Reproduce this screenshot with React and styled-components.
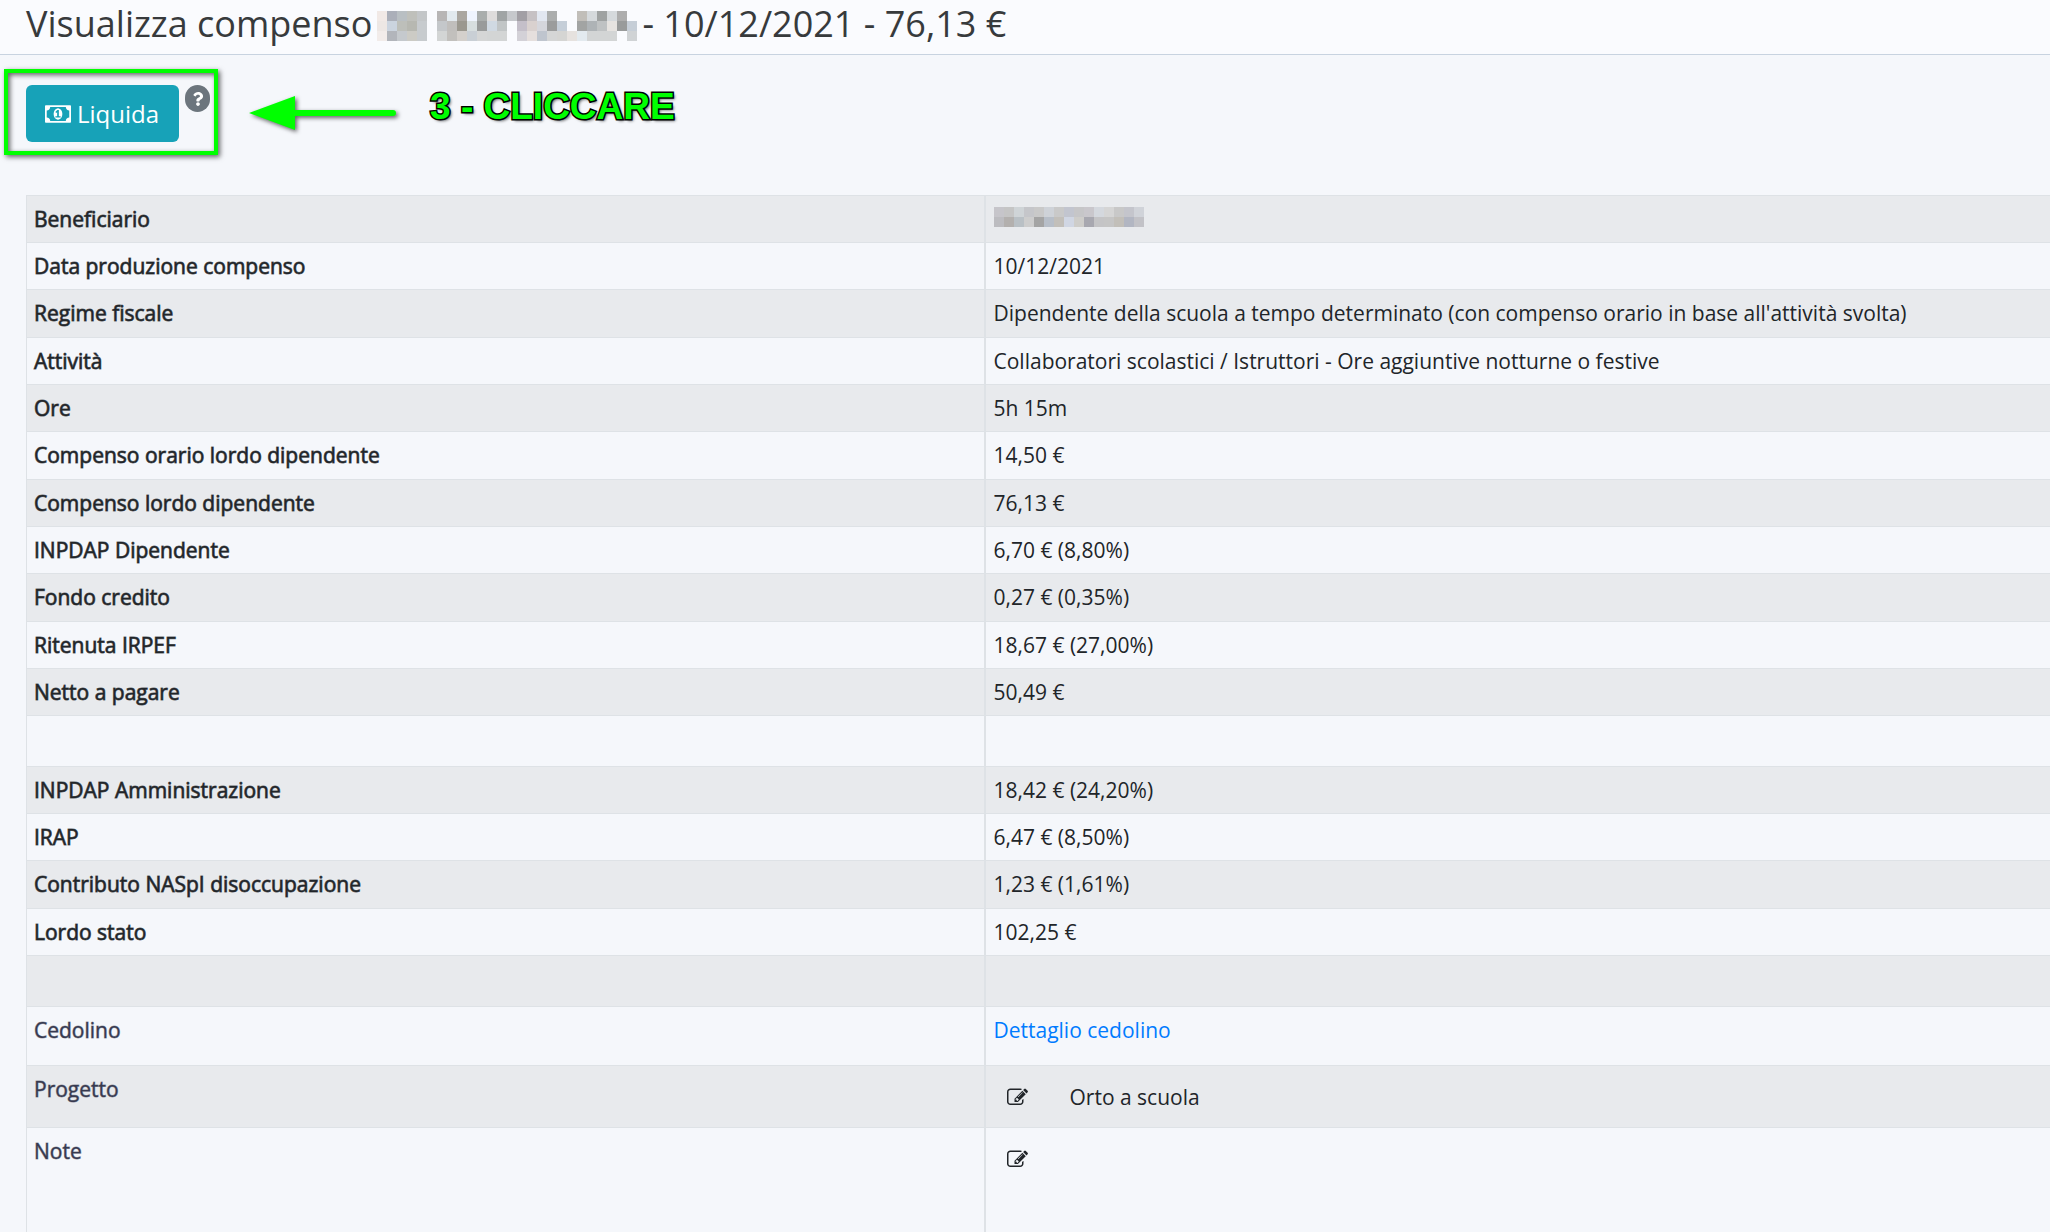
import styled, {createGlobalStyle} from "styled-components";
import {FaQuestion} from "react-icons/fa";

const rows = [
    {label: "Beneficiario", hidden: true},
    {label: "Data produzione compenso", value: "10/12/2021"},
    {label: "Regime fiscale", value: "Dipendente della scuola a tempo determinato (con compenso orario in base all'attività svolta)"},
    {label: "Attività", value: "Collaboratori scolastici / Istruttori - Ore aggiuntive notturne o festive"},
    {label: "Ore", value: "5h 15m"},
    {label: "Compenso orario lordo dipendente", value: "14,50 €"},
    {label: "Compenso lordo dipendente", value: "76,13 €"},
    {label: "INPDAP Dipendente", value: "6,70 € (8,80%)"},
    {label: "Fondo credito", value: "0,27 € (0,35%)"},
    {label: "Ritenuta IRPEF", value: "18,67 € (27,00%)"},
    {label: "Netto a pagare", value: "50,49 €"},
];

const adminRows = [
    {label: "INPDAP Amministrazione", value: "18,42 € (24,20%)"},
    {label: "IRAP", value: "6,47 € (8,50%)"},
    {label: "Contributo NASpI disoccupazione", value: "1,23 € (1,61%)"},
    {label: "Lordo stato", value: "102,25 €"},
];

// one array per line of 10px blocks, "" is empty
const titleMosaic = [
    ["#f1e9e6", "#abafb9", "#b9bfc3", "#bfc0bb", "#c3c6c8", "", "#b7b5b5", "#e2e9ee", "#aaa6a0", "#eff4fe", "#a9adac", "#dedcdc", "#a0a4a5", "#c6c8cc", "#a29fa5", "#c6c1c4", "#e2e7f1", "#abadad", "", "", "#c1beb9", "#d5d9dc", "#9fa2a2", "#d5d9dc", "#adadad", ""],
    ["#ede7e4", "#cbd4df", "#bdbfba", "#b7b8b1", "#c7cbce", "", "#c4c7ca", "#c0bebc", "#9b988f", "#d7dedf", "#999b9b", "#d0d9e2", "#c1c5c6", "", "#c4bfc9", "#d9d1cf", "#d5d6dc", "#9b9c9c", "#c5ced8", "", "#a2a4a3", "#aeb3b6", "#bfc2c3", "#e6e3e0", "#999b9b", "#c6ced7"],
    ["#f2ecea", "#b2b5bb", "#c5c9cd", "#cccbc5", "#c7cbce", "", "#d3d5d5", "#c2c0bd", "#d4d0cc", "#c9cfd5", "#d5d6d6", "#d3d5d5", "#d3d5d5", "", "#d3d1d7", "#e5dfdd", "#bfc5ce", "#d5d6d6", "#d5d5d3", "#e6e2df", "#e3eaef", "#d3d5d5", "#d3d5d5", "#d3d5d5", "", "#d0d3d5"],
];

const nameMosaic = [
    ["#c6c5ca", "#c5c5c5", "#cfd4d7", "#c5c6ca", "#c9c9c9", "#ced2d8", "#c9c9c9", "#c2c5cf", "#c6c6c8", "#c9c7cc", "#d4d8de", "#d5d5d5", "#c8c8c8", "#c4c5cc", "#d0d3d9"],
    ["#bcbcc0", "#b3b0ae", "#b9c0c5", "#cdcdcd", "#a4a4a4", "#b7bec8", "#c2bfba", "#d0d6e3", "#cecdca", "#a8a8b0", "#c4c4c6", "#c5c5c5", "#c2bfb9", "#b2b6c2", "#c2c2c7"],
];

function Mosaic({colors}){
    return(
        <Blocks $columns={colors[0].length} aria-hidden="true">
            {colors.flat().map((color, i) => (
                <Block key={i} $color={color} />
            ))}
        </Blocks>
    )
}

function MoneyIcon(){
    return(
        <MoneySvg viewBox="-64 256 1920 1280" aria-hidden="true">
            <path d="M704 1152h384v-96h-128v-448h-114l-148 137 77 80q42-37 55-57h2v288h-128v96zm512-256q0 70-21 142t-59.5 134-101.5 101-138 39-138-39-101.5-101-59.5-134-21-142 21-142 59.5-134 101.5-101 138-39 138 39 101.5 101 59.5 134 21 142zm512 256v-512q-106 0-181-75t-75-181h-1152q0 106-75 181t-181 75v512q106 0 181 75t75 181h1152q0-106 75-181t181-75zm128-832v1152q0 26-19 45t-45 19h-1792q-26 0-45-19t-19-45v-1152q0-26 19-45t45-19h1792q26 0 45 19t19 45z" />
        </MoneySvg>
    )
}

function EditIcon(){
    return(
        <svg width="21" height="21" viewBox="0 0 1792 1792" fill="currentColor" aria-hidden="true">
            <path d="M888 1184l116-116-152-152-116 116v56h96v96h56zm440-720q-16-16-33 1l-350 350q-17 17-1 33t33-1l350-350q17-17 1-33zm80 594v190q0 119-84.5 203.5t-203.5 84.5h-832q-119 0-203.5-84.5t-84.5-203.5v-832q0-119 84.5-203.5t203.5-84.5h832q63 0 117 25 15 7 18 23 3 17-9 29l-49 49q-14 14-32 8-23-6-45-6h-832q-66 0-113 47t-47 113v832q0 66 47 113t113 47h832q66 0 113-47t47-113v-126q0-13 9-22l64-64q15-15 35-7t20 29zm-96-738l288 288-672 672h-288v-288zm444 132l-92 92-288-288 92-92q28-28 68-28t68 28l152 152q28 28 28 68t-28 68z" />
        </svg>
    )
}

function DataRow({row}){
    return(
        <Row>
            <Label scope="row">{row.label}</Label>
            <Value>{row.hidden ? <Mosaic colors={nameMosaic} /> : row.value}</Value>
        </Row>
    )
}

function App(){
    return(
        <>
            <GlobalStyle />
            <Header>
                <Title>
                    Visualizza compenso
                    <Mosaic colors={titleMosaic} />
                    - 10/12/2021 - 76,13 €
                </Title>
            </Header>
            <Main>
                <Toolbar>
                    <Highlight>
                        <PayButton type="button">
                            <MoneyIcon />
                            Liquida
                        </PayButton>
                        <HelpButton type="button" aria-label="Aiuto">
                            <FaQuestion />
                        </HelpButton>
                    </Highlight>
                    <Arrow viewBox="0 0 150 34" aria-hidden="true">
                        <path d="M0 17L46 0V14H144a3 3 0 0 1 0 6H46V34Z" />
                    </Arrow>
                    <Step>3 - CLICCARE</Step>
                </Toolbar>
                <Table>
                    <tbody>
                        {rows.map((row) => (
                            <DataRow key={row.label} row={row} />
                        ))}
                    </tbody>
                    <tbody>
                        <Spacer>
                            <Label as="td" />
                            <Value />
                        </Spacer>
                    </tbody>
                    <tbody>
                        {adminRows.map((row) => (
                            <DataRow key={row.label} row={row} />
                        ))}
                        <Spacer>
                            <Label as="td" />
                            <Value />
                        </Spacer>
                        <Row $height={59}>
                            <Label scope="row" $muted>Cedolino</Label>
                            <Value><Link href="#cedolino">Dettaglio cedolino</Link></Value>
                        </Row>
                        <Row $height={62}>
                            <Label scope="row" $muted>Progetto</Label>
                            <Value>
                                <Editable>
                                    <EditButton type="button" aria-label="Modifica progetto"><EditIcon /></EditButton>
                                    Orto a scuola
                                </Editable>
                            </Value>
                        </Row>
                        <Row $height={120}>
                            <Label scope="row" $muted>Note</Label>
                            <Value>
                                <Editable>
                                    <EditButton type="button" aria-label="Modifica note"><EditIcon /></EditButton>
                                </Editable>
                            </Value>
                        </Row>
                    </tbody>
                </Table>
            </Main>
        </>
    )
}
export default App;

const GlobalStyle=createGlobalStyle`
*{
    box-sizing:border-box;
}
html{
    overflow:hidden;
}
body{
    margin:0;
    background:#f5f7fb;
    color:#212529;
    font-family:"Open Sans",sans-serif;
    font-size:21px;
    font-weight:400;
    line-height:32px;
}
button{
    font:inherit;
    border:0;
    padding:0;
    cursor:pointer;
}
`;
const Header=styled.header`
height:55px;
padding:0 26px;
background:#fafbfe;
border-bottom:1px solid #c8d3e0;
`;
const Title=styled.h1`
display:flex;
align-items:center;
gap:5px;
margin:0;
color:#373a3c;
font-size:36px;
font-weight:400;
line-height:48px;
white-space:nowrap;
`;
const Blocks=styled.span`
display:inline-grid;
grid-template-columns:repeat(${(props) => props.$columns},10px);
grid-auto-rows:10px;
margin-top:4px;
vertical-align:top;
`;
const Block=styled.span`
background:${(props) => props.$color || "transparent"};
`;
const Main=styled.main`
padding:14px 0 0 26px;
`;
const Toolbar=styled.div`
display:flex;
align-items:flex-start;
margin:0 0 40px -22px;
`;
const Highlight=styled.div`
display:flex;
align-items:flex-start;
gap:6px;
padding:12px 4px 9px 18px;
border:4px solid #00ff00;
box-shadow:2px 2px 5px rgba(0,0,0,0.6),inset 2px 2px 5px rgba(0,0,0,0.6);
`;
const PayButton=styled.button`
display:flex;
align-items:center;
gap:6px;
height:57px;
padding:0 20px 0 19px;
border-radius:6px;
background:#17a2b8;
color:white;
font-size:24px;
`;
const MoneySvg=styled.svg`
width:26px;
height:18px;
fill:currentColor;
`;
const HelpButton=styled.button`
display:flex;
align-items:center;
justify-content:center;
width:25px;
height:27px;
border-radius:14px;
background:#6c757d;
color:white;
font-size:14px;
`;
const Arrow=styled.svg`
width:150px;
height:34px;
margin:27px 0 0 31px;
fill:#00ff00;
overflow:visible;
filter:drop-shadow(2px 2px 2px rgba(0,0,0,0.6));
`;
const Step=styled.strong`
margin:22px 0 0 31px;
color:#00ff00;
font-family:"Liberation Sans",Arial,sans-serif;
font-size:37px;
font-weight:700;
-webkit-text-stroke:3px black;
paint-order:stroke fill;
text-shadow:2px 2px 3px rgba(0,0,0,0.6);
`;
const Table=styled.table`
width:100%;
border-collapse:collapse;
border-left:1px solid #dee2e6;
tr:nth-child(odd){
    background:#e8eaed;
}
tbody:nth-child(2) tr{
    background:none;
}
`;
const Row=styled.tr`
height:${(props) => props.$height || 47}px;
&:nth-child(3n){
    height:${(props) => props.$height || 48}px;
}
`;
const Spacer=styled.tr`
height:51px;
`;
const Label=styled.th`
width:958px;
padding:7px 8px 7px 7px;
border-top:1px solid #dee2e6;
color:${(props) => props.$muted ? "#373a50" : "#212529"};
font-weight:400;
-webkit-text-stroke:1px ${(props) => props.$muted ? "rgba(55,58,80,0.5)" : "rgba(33,37,41,0.7)"};
text-align:left;
vertical-align:top;
`;
const Value=styled.td`
padding:7px 8px;
border-top:1px solid #dee2e6;
border-left:2px solid #dee2e6;
vertical-align:top;
`;
const Link=styled.a`
color:#007bff;
text-decoration:none;
`;
const Editable=styled.div`
display:flex;
align-items:center;
gap:42px;
min-height:40px;
padding:8px 0 0 13px;
`;
const EditButton=styled.button`
display:flex;
background:none;
color:inherit;
`;
